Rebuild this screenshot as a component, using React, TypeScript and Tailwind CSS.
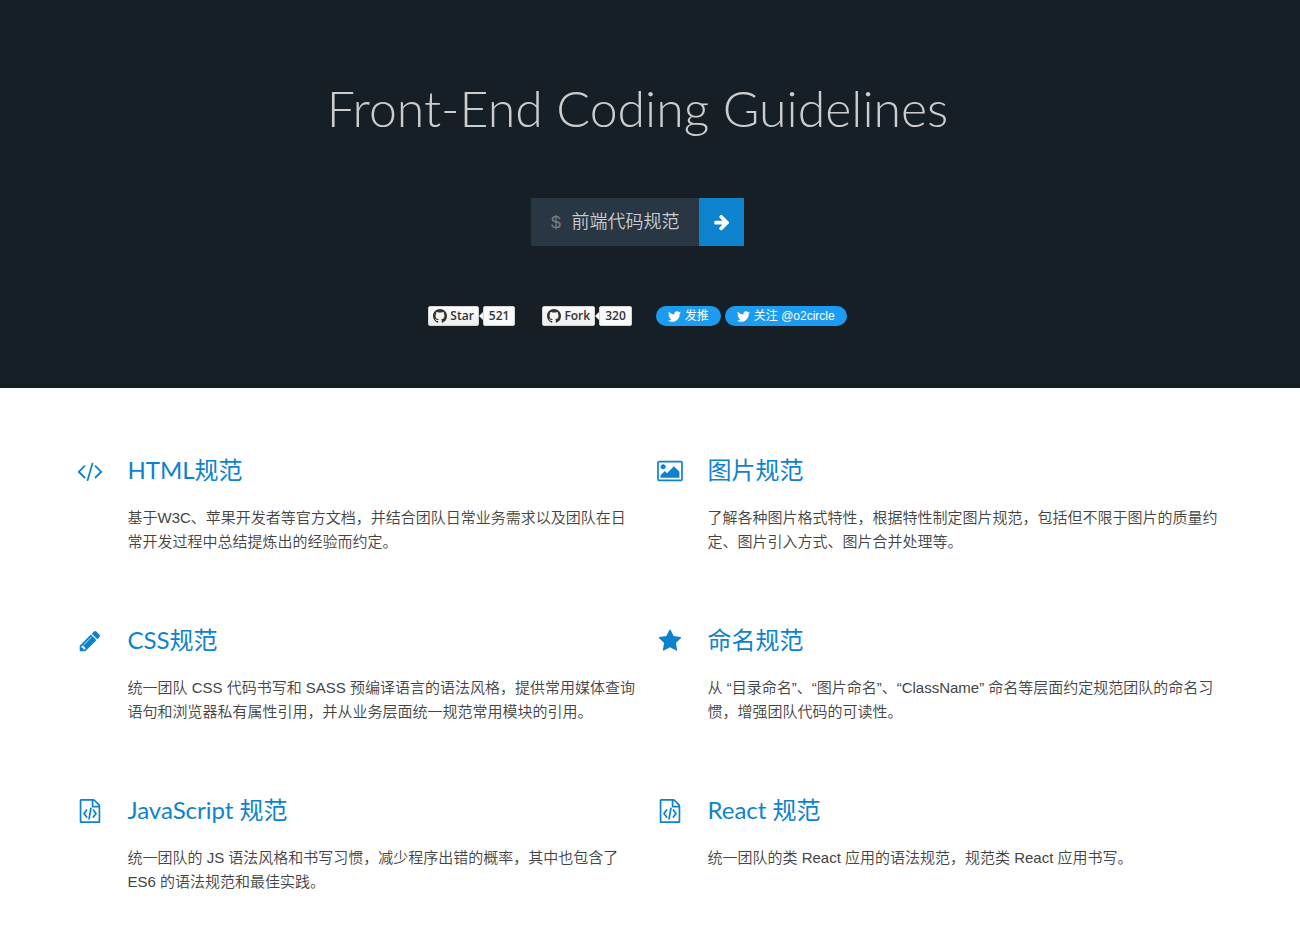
import type { ReactNode } from "react";
import { FaTwitter } from "react-icons/fa";

type IconShape = { box: string; width: string; path: string };

const icons: Record<string, IconShape> = {
  code: {
    box: "0 0 1920 1792",
    width: "w-[26px]",
    path: "M617 1399l-50 50q-10 10-23 10t-23-10l-466-466q-10-10-10-23t10-23l466-466q10-10 23-10t23 10l50 50q10 10 10 23t-10 23l-393 393 393 393q10 10 10 23t-10 23zm591-1067l-373 1291q-4 13-15.5 19.5t-23.5 2.5l-62-17q-13-4-19.5-15.5t-2.5-24.5l373-1291q4-13 15.5-19.5t23.5-2.5l62 17q13 4 19.5 15.5t2.5 24.5zm657 651l-466 466q-10 10-23 10t-23-10l-50-50q-10-10-10-23t10-23l393-393-393-393q-10-10-10-23t10-23l50-50q10-10 23-10t23 10l466 466q10 10 10 23t-10 23z",
  },
  picture: {
    box: "64 0 1920 1792",
    width: "w-[26px]",
    path: "M704 576q0 80-56 136t-136 56-136-56-56-136 56-136 136-56 136 56 56 136zm1024 384v448h-1408v-192l320-320 160 160 512-512zm96-704h-1600q-13 0-22.5 9.5t-9.5 22.5v1216q0 13 9.5 22.5t22.5 9.5h1600q13 0 22.5-9.5t9.5-22.5v-1216q0-13-9.5-22.5t-22.5-9.5zm160 32v1216q0 66-47 113t-113 47h-1600q-66 0-113-47t-47-113v-1216q0-66 47-113t113-47h1600q66 0 113 47t47 113z",
  },
  pencil: {
    box: "0 0 1792 1792",
    width: "w-6",
    path: "M491 1536l91-91-235-235-91 91v107h128v128h107zm523-928q0-22-22-22-10 0-17 7l-542 542q-7 7-7 17 0 22 22 22 10 0 17-7l542-542q7-7 7-17zm-54-192l416 416-832 832h-416v-416zm683 96q0 53-37 90l-166 166-416-416 166-165q36-38 90-38 53 0 91 38l235 234q37 39 37 91z",
  },
  star: {
    box: "0 0 1792 1792",
    width: "w-6",
    path: "M1728 647q0 22-26 48l-363 354 86 500q1 7 1 20 0 21-10.5 35.5t-30.5 14.5q-19 0-40-12l-449-236-449 236q-22 12-40 12-21 0-31.5-14.5t-10.5-35.5q0-6 2-20l86-500-364-354q-25-27-25-48 0-37 56-46l502-73 225-455q19-41 49-41t49 41l225 455 502 73q56 9 56 46z",
  },
  file: {
    box: "0 0 1792 1792",
    width: "w-6",
    path: "M1596 380q28 28 48 76t20 88v1152q0 40-28 68t-68 28h-1344q-40 0-68-28t-28-68v-1600q0-40 28-68t68-28h896q40 0 88 20t76 48zm-444-244v376h376q-10-29-22-41l-313-313q-12-12-41-22zm384 1528v-1024h-416q-40 0-68-28t-28-68v-416h-768v1536h1280zm-928-896q8-11 21-12.5t24 6.5l51 38q11 8 12.5 21t-6.5 24l-182 243 182 243q8 11 6.5 24t-12.5 21l-51 38q-11 8-24 6.5t-21-12.5l-226-301q-14-19 0-38zm802 301q14 19 0 38l-226 301q-8 11-21 12.5t-24-6.5l-51-38q-11-8-12.5-21t6.5-24l182-243-182-243q-8-11-6.5-24t12.5-21l51-38q11-8 24-6.5t21 12.5zm-620 461q-13-2-20.5-13t-5.5-24l138-831q2-13 13-20.5t24-5.5l63 10q13 2 20.5 13t5.5 24l-138 831q-2 13-13 20.5t-24 5.5z",
  },
};

const sections = [
  { icon: "code", title: "HTML规范", text: "基于W3C、苹果开发者等官方文档，并结合团队日常业务需求以及团队在日常开发过程中总结提炼出的经验而约定。" },
  { icon: "picture", title: "图片规范", text: "了解各种图片格式特性，根据特性制定图片规范，包括但不限于图片的质量约定、图片引入方式、图片合并处理等。" },
  { icon: "pencil", title: "CSS规范", text: "统一团队 CSS 代码书写和 SASS 预编译语言的语法风格，提供常用媒体查询语句和浏览器私有属性引用，并从业务层面统一规范常用模块的引用。" },
  { icon: "star", title: "命名规范", text: "从 “目录命名”、“图片命名”、“ClassName” 命名等层面约定规范团队的命名习惯，增强团队代码的可读性。" },
  { icon: "file", title: "JavaScript 规范", text: "统一团队的 JS 语法风格和书写习惯，减少程序出错的概率，其中也包含了 ES6 的语法规范和最佳实践。" },
  { icon: "file", title: "React 规范", text: "统一团队的类 React 应用的语法规范，规范类 React 应用书写。" },
];

function GithubMark() {
  return (
    <svg viewBox="0 0 16 16" className="size-3.5" fill="currentColor" aria-hidden="true">
      <path d="M8 0C3.58 0 0 3.58 0 8c0 3.54 2.29 6.53 5.47 7.59.4.07.55-.17.55-.38 0-.19-.01-.82-.01-1.49-2.01.37-2.53-.49-2.69-.94-.09-.23-.48-.94-.82-1.13-.28-.15-.68-.52-.01-.53.63-.01 1.08.58 1.23.82.72 1.21 1.87.87 2.33.66.07-.52.28-.87.51-1.07-1.78-.2-3.64-.89-3.64-3.95 0-.87.31-1.59.82-2.15-.08-.2-.36-1.02.08-2.12 0 0 .67-.21 2.2.82.64-.18 1.32-.27 2-.27s1.36.09 2 .27c1.53-1.04 2.2-.82 2.2-.82.44 1.1.16 1.92.08 2.12.51.56.82 1.27.82 2.15 0 3.07-1.87 3.75-3.65 3.95.29.25.54.73.54 1.48 0 1.07-.01 1.93-.01 2.2 0 .21.15.46.55.38A8.01 8.01 0 0 0 16 8c0-4.42-3.58-8-8-8z" />
    </svg>
  );
}

function GithubButton({ label, count }: { label: string; count: string }) {
  return (
    <div className="flex h-5 font-['Open_Sans','Noto_Sans',sans-serif] text-xs leading-[18px] font-semibold text-[#333]">
      <a href="#" className="flex items-center gap-[3px] rounded-xs border border-[#d5d5d5] bg-linear-to-b from-[#fcfcfc] to-[#eee] px-1">
        <GithubMark />
        {label}
      </a>
      <span className="my-auto border-y-4 border-r-4 border-y-transparent border-r-[#fafafa]" />
      <a href="#" className="rounded-xs border border-[#d4d4d4] bg-[#fafafa] px-[5px]">
        {count}
      </a>
    </div>
  );
}

function TwitterButton({ children }: { children: ReactNode }) {
  return (
    <a href="#" className="flex h-5 items-center gap-1 rounded-full bg-[#1d9bf0] px-3 text-xs text-white">
      <FaTwitter className="size-[13px]" aria-hidden="true" />
      {children}
    </a>
  );
}

export default function App() {
  return (
    <div className="min-h-screen bg-white font-['Liberation_Sans','Noto_Sans_CJK_SC',sans-serif]">
      <header className="flex flex-col items-center border-b-4 border-[#151c22] bg-[#171f26] pt-[78px] pr-[25px] pb-[58px]">
        <h1 className="text-center font-['Lato','Noto_Sans_CJK_SC',sans-serif] text-[50px] leading-[60px] font-light text-[#ccc]">
          Front-End Coding Guidelines
        </h1>
        <a href="#" className="mt-[60px] flex h-12 bg-[#293643] text-lg text-[#ccc]">
          <span className="flex items-center gap-2.5 px-5 pt-0.5 font-['Liberation_Mono','Noto_Sans_CJK_SC',monospace] font-[350]">
            <span className="text-[#777f87]">$</span>
            前端代码规范
          </span>
          <span className="grid w-[45px] place-items-center bg-[#0e83cd] text-white">
            <svg viewBox="0 0 1792 1792" className="size-[18px]" fill="currentColor" aria-hidden="true">
              <path d="M1600 960q0 54-37 91l-651 651q-39 37-91 37-51 0-90-37l-75-75q-38-38-38-91t38-91l293-293h-704q-52 0-84.5-37.5t-32.5-90.5v-128q0-53 32.5-90.5t84.5-37.5h704l-293-294q-38-36-38-90t38-90l75-75q38-38 90-38 53 0 91 38l651 651q37 35 37 90z" />
            </svg>
          </span>
        </a>
        <div className="mt-[60px] flex flex-wrap justify-center">
          <div className="mr-[27px]">
            <GithubButton label="Star" count="521" />
          </div>
          <div className="mr-6">
            <GithubButton label="Fork" count="320" />
          </div>
          <div className="flex gap-1">
            <TwitterButton>发推</TwitterButton>
            <TwitterButton>关注 @o2circle</TwitterButton>
          </div>
        </div>
      </header>
      <main className="pr-[25px]">
        <div className="mx-auto grid max-w-[1160px] gap-y-[70px] pt-[66px] pb-11 md:grid-cols-2">
          {sections.map(({ icon, title, text }) => (
            <section key={title} className="flex gap-[25px] pl-[19px]">
              <span className="flex h-[34px] w-[26px] shrink-0 items-center justify-center text-[#0e83cd]">
                <svg viewBox={icons[icon].box} className={"h-6 shrink-0 " + icons[icon].width} fill="currentColor" aria-hidden="true">
                  <path d={icons[icon].path} />
                </svg>
              </span>
              <div>
                <h2 className="font-['Lato','Noto_Sans_CJK_SC',sans-serif] text-2xl leading-8">
                  <a href="#" className="text-[#0e83cd]">{title}</a>
                </h2>
                <p className="mt-5 text-[15px] leading-6 font-[350] text-[#444]">{text}</p>
              </div>
            </section>
          ))}
        </div>
      </main>
    </div>
  );
}
